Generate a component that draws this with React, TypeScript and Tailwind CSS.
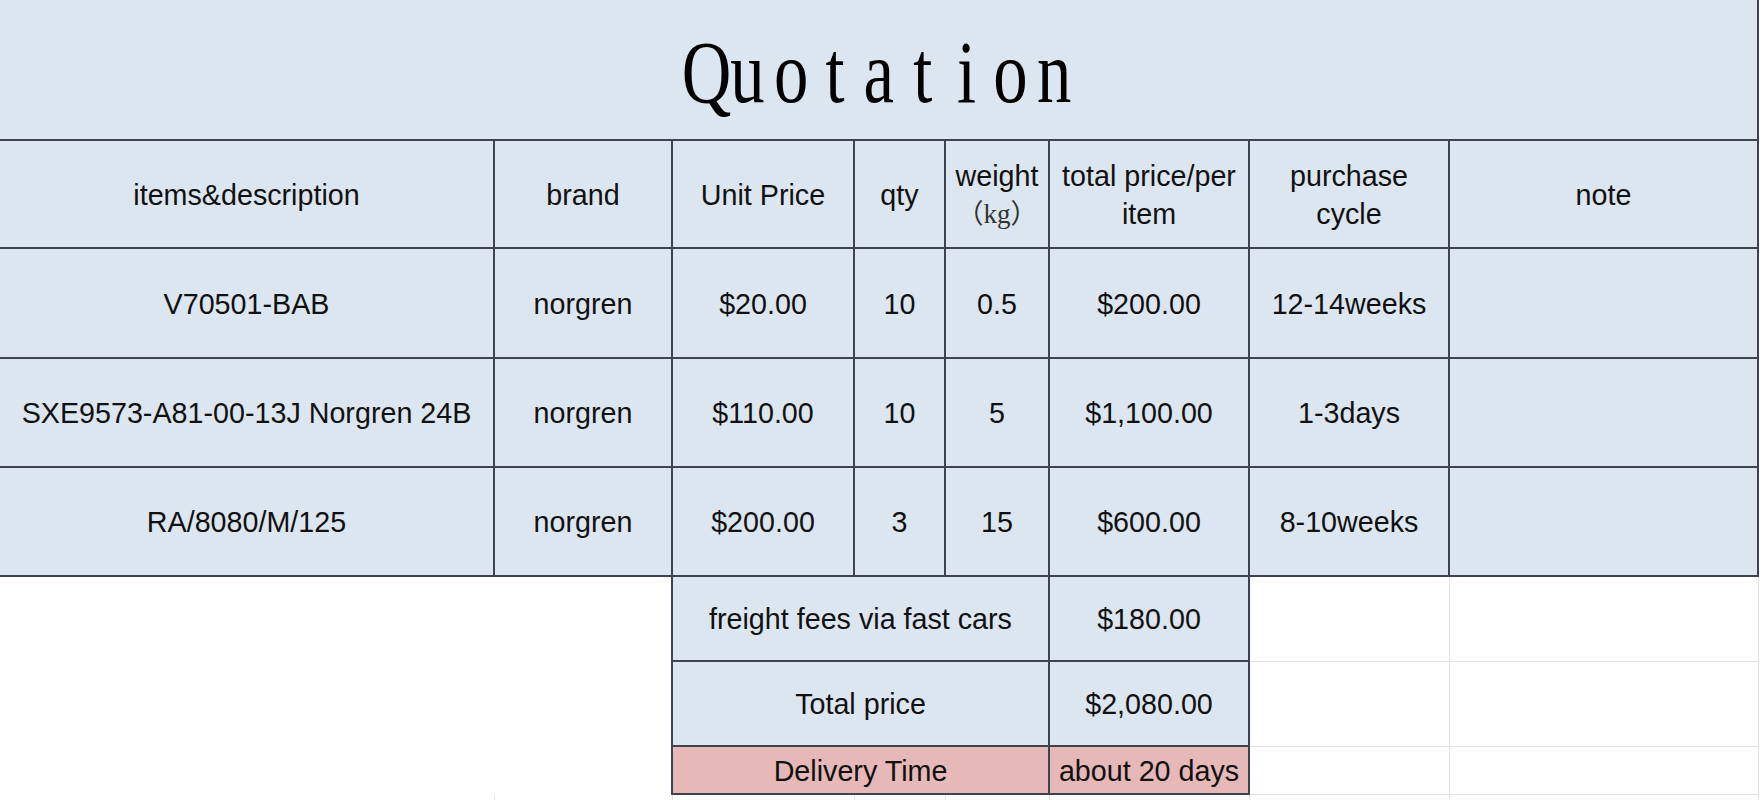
import React from "react";

const header = [
  ["items&description"],
  ["brand"],
  ["Unit Price"],
  ["qty"],
  ["weight", "kg"],
  ["total price/per", "item"],
  ["purchase", "cycle"],
  ["note"],
];

const rows = [
  ["V70501-BAB", "norgren", "$20.00", "10", "0.5", "$200.00", "12-14weeks", ""],
  ["SXE9573-A81-00-13J Norgren 24B", "norgren", "$110.00", "10", "5", "$1,100.00", "1-3days", ""],
  ["RA/8080/M/125", "norgren", "$200.00", "3", "15", "$600.00", "8-10weeks", ""],
];

const summary = [
  { label: "freight fees via fast cars", value: "$180.00", pink: false },
  { label: "Total price", value: "$2,080.00", pink: false },
  { label: "Delivery Time", value: "about 20 days", pink: true },
];

const cell = "flex items-center justify-center text-center border-r-2 border-b-2 border-[#3d4450] whitespace-nowrap";
const blue = "bg-[#dce6f1]";
const grid = "border-r border-b border-[#e3e3e3] bg-white";

export default function App() {
  return (
    <div className="w-[1761px] h-[800px] overflow-hidden bg-white text-[#111] font-['Liberation_Sans','Noto_Sans_CJK_SC',sans-serif] text-[28.7px]">
      <div className="grid w-[1759px] grid-cols-[495px_178px_182px_91px_104px_200px_200px_309px] grid-rows-[141px_108px_110px_109px_109px_85px_85px_48px_5px]">
        {/* 标题：等宽衬线字，逐字定宽再横向压缩 */}
        <div className={`col-span-8 ${cell} ${blue} pt-[7px]`}>
          <span className="flex font-['Liberation_Serif',serif] text-[88px] leading-none text-black font-normal scale-x-[0.78]">
            {"Quotation".split("").map((ch, i) => (
              <span key={i} className="inline-block w-[56.2px] text-center">
                {ch}
              </span>
            ))}
          </span>
        </div>

        {/* 表头 */}
        {header.map((h, i) => (
          <div key={i} className={`${cell} ${blue} flex-col leading-[38px] pt-[2px]`}>
            {h.length === 1 ? (
              <span>{h[0]}</span>
            ) : i === 4 ? (
              <>
                <span>{h[0]}</span>
                <span className="font-['Liberation_Serif','Noto_Sans_CJK_SC',serif] text-[27px] text-[#333]">（{h[1]}）</span>
              </>
            ) : (
              <>
                <span>{h[0]}</span>
                <span>{h[1]}</span>
              </>
            )}
          </div>
        ))}

        {/* 明细 */}
        {rows.map((r, ri) =>
          r.map((v, ci) => (
            <div key={`${ri}-${ci}`} className={`${cell} ${blue} pt-[3px]`}>
              {v}
            </div>
          ))
        )}

        {/* 汇总 */}
        <div className="col-span-2 row-span-3 border-r-2 border-[#3d4450] bg-white" />
        {summary.map((s, i) => (
          <React.Fragment key={i}>
            <div className={`col-span-3 ${cell} pt-[3px] ${s.pink ? "bg-[#e6b8b7]" : blue}`}>{s.label}</div>
            <div className={`${cell} pt-[3px] ${s.pink ? "bg-[#e6b8b7]" : blue}`}>{s.value}</div>
            <div className={grid} />
            <div className={grid} />
          </React.Fragment>
        ))}

        {/* 底部网格线 */}
        {Array.from({ length: 8 }).map((_, i) => (
          <div key={`g-${i}`} className="border-r border-[#e3e3e3] bg-white" />
        ))}
      </div>
    </div>
  );
}
